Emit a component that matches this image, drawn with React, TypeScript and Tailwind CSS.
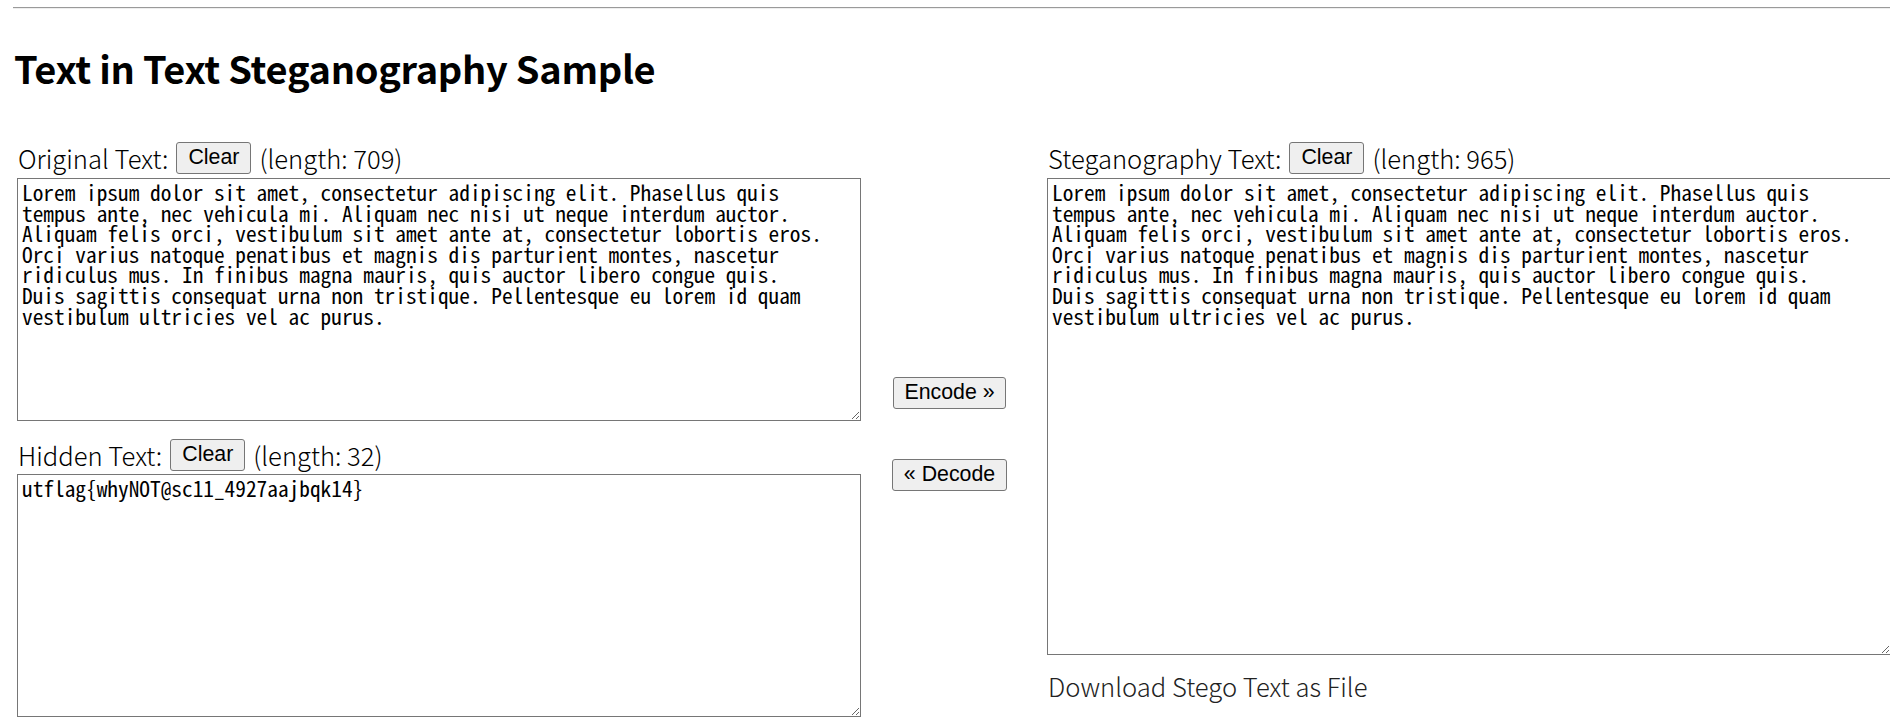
import React from 'react';

const coverText = [
  'Lorem ipsum dolor sit amet, consectetur adipiscing elit. Phasellus quis',
  'tempus ante, nec vehicula mi. Aliquam nec nisi ut neque interdum auctor.',
  'Aliquam felis orci, vestibulum sit amet ante at, consectetur lobortis eros.',
  'Orci varius natoque penatibus et magnis dis parturient montes, nascetur',
  'ridiculus mus. In finibus magna mauris, quis auctor libero congue quis.',
  'Duis sagittis consequat urna non tristique. Pellentesque eu lorem id quam',
  'vestibulum ultricies vel ac purus.',
].join('\n');

const hiddenText = 'utflag{whyNOT@sc11_4927aajbqk14}';

const labelFont = "font-['Noto_Sans_CJK_JP',sans-serif]";
const areaCls =
  "block w-[844px] resize border border-[#767676] bg-white px-[4px] py-[3px] text-[21.33px] leading-[20.6px] text-black font-['Noto_Sans_Mono_CJK_JP','Liberation_Mono',monospace] whitespace-pre-wrap outline-none";
const btnCls =
  "h-[32px] rounded-[3px] border border-[#767676] bg-[#efefef] px-[9px] text-[21.33px] leading-none text-black font-['Liberation_Sans',Arial,sans-serif]";

const FieldLabel: React.FC<{ title: string; length: number }> = ({ title, length }) => (
  <div className={`flex h-[32px] items-center gap-[8px] pl-[1px] text-[25.6px] font-light text-black ${labelFont}`}>
    <span>{title}</span>
    <button className={`${btnCls} w-[75px] px-0`}>Clear</button>
    <span>(length: {length})</span>
  </div>
);

export default function App() {
  return (
    <div className="h-[720px] w-[1890px] overflow-hidden bg-white">
      <div className="pl-[13px] pt-[7px]">
        <div className="border-t border-b border-t-[#9a9a9a] border-b-[#eeeeee]" />

        <h2 className={`mt-[39px] pl-[1px] text-[38px] font-bold leading-[40px] tracking-[-0.3px] text-black ${labelFont}`}>
          Text in Text Steganography Sample
        </h2>

        <div className="mt-[54px] flex pl-[4px]">
          {/* left column: original + hidden */}
          <div className="w-[844px] shrink-0">
            <FieldLabel title="Original Text:" length={709} />
            <textarea className={`${areaCls} mt-[4px] h-[243px]`} defaultValue={coverText} spellCheck={false} />
            <div className="mt-[18px]">
              <FieldLabel title="Hidden Text:" length={32} />
            </div>
            <textarea className={`${areaCls} mt-[3px] h-[243px]`} defaultValue={hiddenText} spellCheck={false} />
          </div>

          {/* middle buttons */}
          <div className="flex w-[186px] shrink-0 flex-col items-center pr-[9px] pt-[235px]">
            <button className={`${btnCls} w-[113px]`}>Encode »</button>
            <button className={`${btnCls} mt-[50px] w-[115px]`}>« Decode</button>
          </div>

          {/* right column: stego text */}
          <div className="w-[844px] shrink-0">
            <FieldLabel title="Steganography Text:" length={965} />
            <textarea className={`${areaCls} mt-[4px] h-[477px]`} defaultValue={coverText} spellCheck={false} />
            <div className={`mt-[17px] pl-[1px] text-[25.6px] font-light leading-[28px] text-[#222] ${labelFont}`}>
              Download Stego Text as File
            </div>
          </div>
        </div>
      </div>
    </div>
  );
}
